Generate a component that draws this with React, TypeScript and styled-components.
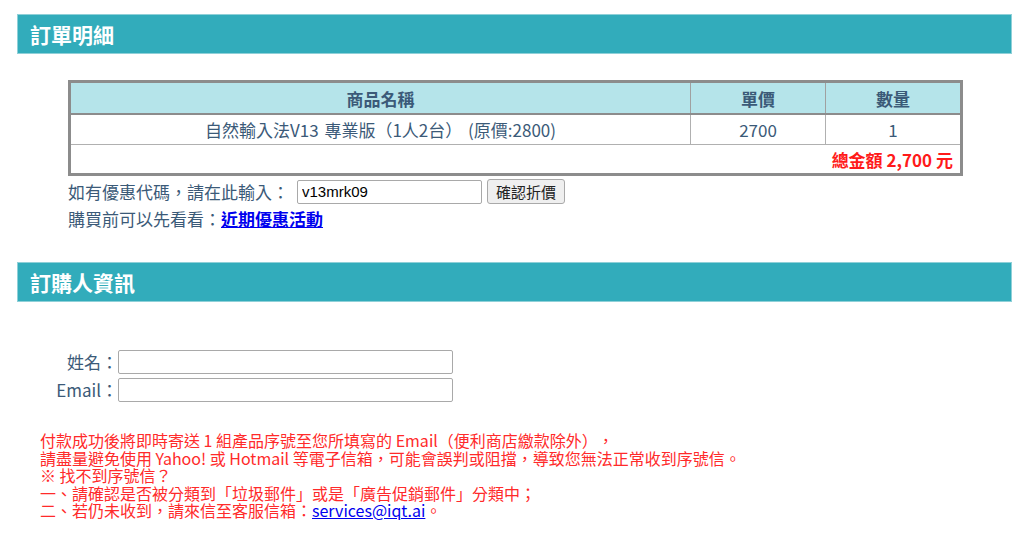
import styled, { createGlobalStyle } from 'styled-components'

const GlobalStyle = createGlobalStyle`
  body {
    margin: 0;
    background: #ffffff;
    font-family: "Noto Sans CJK TC", "Noto Sans", sans-serif;
    color: #3b5a78;
    text-spacing-trim: space-all;
  }
`

const Page = styled.div`
  padding: 14px 12px 0 17px;
`

const SectionBar = styled.div`
  height: 40px;
  background: #32acbb;
  border: 1px solid #8fd0d8;
  box-sizing: border-box;
  display: flex;
  align-items: center;
  padding-left: 12px;
  color: #ffffff;
  font-size: 21px;
  font-weight: 700;
`

const OrderBody = styled.div`
  padding: 26px 0 0 51px;
  height: 208px;
  box-sizing: border-box;
`

const OrderTable = styled.table`
  width: 895px;
  border-collapse: collapse;
  border: 3px solid #8c8c8c;
  font-size: 17px;
`

const HeadCell = styled.th<{ $w?: number }>`
  background: #b5e4ea;
  height: 30px;
  padding: 0;
  font-weight: 700;
  color: #3b5a78;
  border: 1px solid #a0a0a0;
  border-bottom: 2px solid #8c8c8c;
  width: ${(p) => (p.$w ? `${p.$w}px` : 'auto')};
`

const Cell = styled.td`
  height: 29px;
  padding: 0;
  text-align: center;
  border: 1px solid #b0b0b0;
  color: #3b5a78;
  word-spacing: 2px;
`

const TotalCell = styled.td`
  height: 28px;
  padding: 0 7px 0 0;
  text-align: right;
  color: #ff1a1a;
  font-weight: 700;
`

const Line = styled.div`
  display: flex;
  align-items: center;
  font-size: 17px;
  line-height: 23px;
  margin-top: 3px;
  color: #3b5a78;
`

const TextInput = styled.input<{ $w: number; $ml?: number }>`
  width: ${(p) => p.$w}px;
  height: 24px;
  box-sizing: border-box;
  border: 1px solid #a9a9a9;
  border-radius: 2px;
  padding: 0 4px;
  font-family: "Liberation Sans", Arial, sans-serif;
  font-size: 15px;
  color: #000;
  margin: 0 0 0 ${(p) => p.$ml ?? 0}px;
`

const Button = styled.button`
  height: 25px;
  margin-left: 5px;
  padding: 0 8px;
  border: 1px solid #a9a9a9;
  border-radius: 3px;
  background: #efefef;
  font-family: "Noto Sans CJK TC", sans-serif;
  font-size: 15px;
  color: #222;
`

const Link = styled.a`
  color: #0000ee;
  font-weight: 700;
  text-decoration: underline;
`

const BuyerBody = styled.div`
  padding: 47px 0 0 23px;
`

const FormRow = styled.div`
  display: flex;
  align-items: center;
  margin-bottom: 3px;
`

const Label = styled.label`
  width: 78px;
  text-align: right;
  font-size: 17px;
  color: #3b5a78;
`

const Notice = styled.div`
  margin-top: 30px;
  font-size: 16px;
  line-height: 17.5px;
  color: #ff2a2a;
`

const MailLink = styled.a`
  color: #0000ee;
  text-decoration: underline;
`

export default function App() {
  return (
    <>
      <GlobalStyle />
      <Page>
        <SectionBar>訂單明細</SectionBar>
        <OrderBody>
          <OrderTable>
            <thead>
              <tr>
                <HeadCell>商品名稱</HeadCell>
                <HeadCell $w={134}>單價</HeadCell>
                <HeadCell $w={134}>數量</HeadCell>
              </tr>
            </thead>
            <tbody>
              <tr>
                <Cell>自然輸入法V13 專業版（1人2台） (原價:2800)</Cell>
                <Cell>2700</Cell>
                <Cell>1</Cell>
              </tr>
              <tr>
                <TotalCell colSpan={3}>總金額 2,700 元</TotalCell>
              </tr>
            </tbody>
          </OrderTable>
          <Line>
            如有優惠代碼，請在此輸入：
            <TextInput $w={185} $ml={8} defaultValue="v13mrk09" />
            <Button>確認折價</Button>
          </Line>
          <Line>
            購買前可以先看看：<Link href="#">近期優惠活動</Link>
          </Line>
        </OrderBody>
        <SectionBar>訂購人資訊</SectionBar>
        <BuyerBody>
          <FormRow>
            <Label>姓名：</Label>
            <TextInput $w={335} />
          </FormRow>
          <FormRow>
            <Label>Email：</Label>
            <TextInput $w={335} />
          </FormRow>
          <Notice>
            付款成功後將即時寄送 1 組產品序號至您所填寫的 Email（便利商店繳款除外），
            <br />
            請盡量避免使用 Yahoo! 或 Hotmail 等電子信箱，可能會誤判或阻擋，導致您無法正常收到序號信。
            <br />
            ※ 找不到序號信？
            <br />
            一、請確認是否被分類到「垃圾郵件」或是「廣告促銷郵件」分類中；
            <br />
            二、若仍未收到，請來信至客服信箱：<MailLink href="#">services@iqt.ai</MailLink>。
          </Notice>
        </BuyerBody>
      </Page>
    </>
  )
}
